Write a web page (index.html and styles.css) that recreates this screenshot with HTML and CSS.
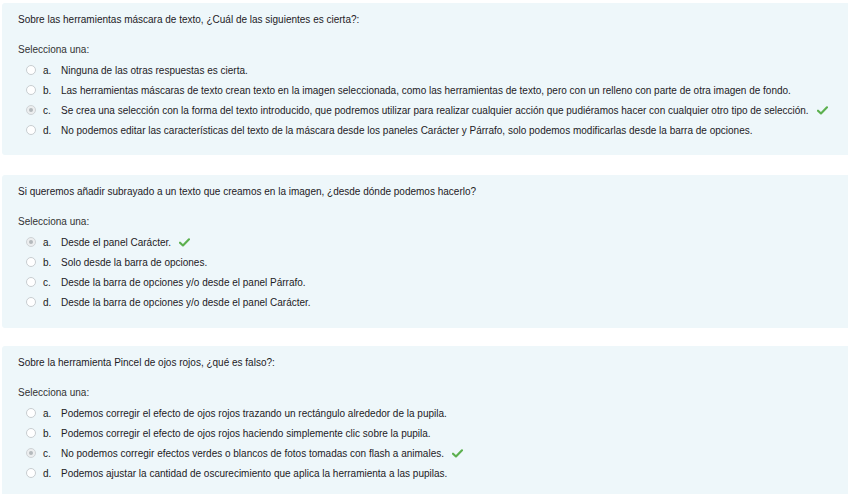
FILE: index.html
```html
<!DOCTYPE html>
<html lang="es">
<head>
<meta charset="utf-8">
<link rel="stylesheet" href="styles.css">
</head>
<body>
<div class="que">
  <div class="qtext">Sobre las herramientas máscara de texto, ¿Cuál de las siguientes es cierta?:</div>
  <div class="prompt">Selecciona una:</div>
  <div class="answer">
    <div class="opt"><span class="radio"></span><span class="let">a.</span><span class="txt">Ninguna de las otras respuestas es cierta.</span></div>
    <div class="opt"><span class="radio"></span><span class="let">b.</span><span class="txt">Las herramientas máscaras de texto crean texto en la imagen seleccionada, como las herramientas de texto, pero con un relleno con parte de otra imagen de fondo.</span></div>
    <div class="opt"><span class="radio checked"></span><span class="let">c.</span><span class="txt">Se crea una selección con la forma del texto introducido, que podremos utilizar para realizar cualquier acción que pudiéramos hacer con cualquier otro tipo de selección.</span><svg class="ok" viewBox="0 0 12 10"><path d="M1 5.2 L4.3 8.3 L11 1.5" /></svg></div>
    <div class="opt"><span class="radio"></span><span class="let">d.</span><span class="txt">No podemos editar las características del texto de la máscara desde los paneles Carácter y Párrafo, solo podemos modificarlas desde la barra de opciones.</span></div>
  </div>
</div>
<div class="que">
  <div class="qtext">Si queremos añadir subrayado a un texto que creamos en la imagen, ¿desde dónde podemos hacerlo?</div>
  <div class="prompt">Selecciona una:</div>
  <div class="answer">
    <div class="opt"><span class="radio checked"></span><span class="let">a.</span><span class="txt">Desde el panel Carácter.</span><svg class="ok" viewBox="0 0 12 10"><path d="M1 5.2 L4.3 8.3 L11 1.5" /></svg></div>
    <div class="opt"><span class="radio"></span><span class="let">b.</span><span class="txt">Solo desde la barra de opciones.</span></div>
    <div class="opt"><span class="radio"></span><span class="let">c.</span><span class="txt">Desde la barra de opciones y/o desde el panel Párrafo.</span></div>
    <div class="opt"><span class="radio"></span><span class="let">d.</span><span class="txt">Desde la barra de opciones y/o desde el panel Carácter.</span></div>
  </div>
</div>
<div class="que">
  <div class="qtext">Sobre la herramienta Pincel de ojos rojos, ¿qué es falso?:</div>
  <div class="prompt">Selecciona una:</div>
  <div class="answer">
    <div class="opt"><span class="radio"></span><span class="let">a.</span><span class="txt">Podemos corregir el efecto de ojos rojos trazando un rectángulo alrededor de la pupila.</span></div>
    <div class="opt"><span class="radio"></span><span class="let">b.</span><span class="txt">Podemos corregir el efecto de ojos rojos haciendo simplemente clic sobre la pupila.</span></div>
    <div class="opt"><span class="radio checked"></span><span class="let">c.</span><span class="txt">No podemos corregir efectos verdes o blancos de fotos tomadas con flash a animales.</span><svg class="ok" viewBox="0 0 12 10"><path d="M1 5.2 L4.3 8.3 L11 1.5" /></svg></div>
    <div class="opt"><span class="radio"></span><span class="let">d.</span><span class="txt">Podemos ajustar la cantidad de oscurecimiento que aplica la herramienta a las pupilas.</span></div>
  </div>
</div>
</body>
</html>
```
FILE: styles.css
```css
html, body {
  margin: 0;
  padding: 0;
  background: #ffffff;
}
body {
  padding: 3px 0 0 2px;
  font-family: "Liberation Sans", Arial, sans-serif;
  font-size: 10px;
  color: #222;
}
.que {
  background: #eef7fa;
  border-radius: 3px 0 0 3px;
  padding: 7px 0 15px 16px;
  margin-bottom: 20px;
}
.que + .que {
  padding-bottom: 16px;
}
.que + .que + .que {
  margin-top: -2px;
}
.qtext {
  line-height: 20px;
  color: #1d2125;
}
.prompt {
  margin-top: 10px;
  line-height: 20px;
  color: #333;
}
.opt {
  display: flex;
  align-items: center;
  height: 20px;
  white-space: nowrap;
}
.radio {
  box-sizing: border-box;
  width: 10px;
  height: 10px;
  border: 1px solid #c8cdd0;
  border-radius: 50%;
  background: #fff;
  margin-left: 8px;
  flex: none;
  display: flex;
  align-items: center;
  justify-content: center;
}
.radio.checked {
  background: #eceeef;
  border-color: #cfd3d6;
}
.radio.checked::after {
  content: "";
  width: 4px;
  height: 4px;
  border-radius: 50%;
  background: #b4b9bc;
}
.let {
  width: 18px;
  margin-left: 7px;
  flex: none;
}
.txt {
  color: #1d2125;
}
.ok {
  width: 11px;
  height: 9px;
  margin-left: 8px;
  flex: none;
}
.ok path {
  fill: none;
  stroke: #5cb04e;
  stroke-width: 2.4;
  stroke-linecap: round;
  stroke-linejoin: round;
}
```
